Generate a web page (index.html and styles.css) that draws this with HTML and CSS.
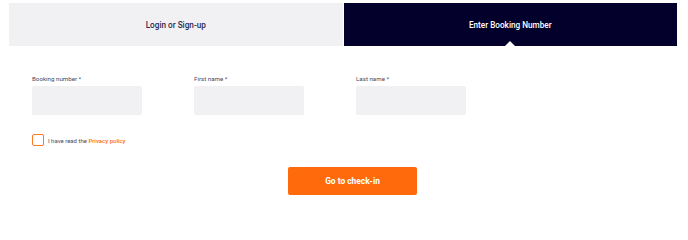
FILE: index.html
```html
<!DOCTYPE html>
<html lang="en">
<head>
<meta charset="utf-8">
<title>Check-in</title>
<link rel="stylesheet" href="styles.css">
</head>
<body>
<div class="page">
  <div class="tabs">
    <div class="tab tab-light">Login or Sign-up</div>
    <div class="tab tab-dark">Enter Booking Number</div>
  </div>
  <form class="form">
    <div class="fields">
      <label class="field">
        <span class="label">Booking number *</span>
        <span class="input"></span>
      </label>
      <label class="field">
        <span class="label">First name *</span>
        <span class="input"></span>
      </label>
      <label class="field">
        <span class="label">Last name *</span>
        <span class="input"></span>
      </label>
    </div>
    <div class="consent">
      <span class="checkbox"></span>
      <span class="consent-text">I have read the <a class="link">Privacy policy</a></span>
    </div>
    <div class="actions">
      <span class="button">Go to check-in</span>
    </div>
  </form>
</div>
</body>
</html>
```
FILE: styles.css
```css
* { box-sizing: border-box; }
html, body { margin: 0; padding: 0; background: #ffffff; }
body { font-family: "Roboto", "Lato", sans-serif; color: #2c2b4b; }

.page { padding: 3px 11px 0 9px; }

.tabs {
  display: grid;
  grid-template-columns: 1fr 1fr;
  column-gap: 1px;
}
.tab {
  height: 43px;
  display: flex;
  align-items: center;
  justify-content: center;
  font-size: 8.2px;
  font-weight: 500;
  position: relative;
}
.tab-light { background: #f1f1f3; color: #2b2a4e; }
.tab-dark { background: #03012c; color: #ffffff; }
.tab-dark::after {
  content: "";
  position: absolute;
  left: 50%;
  bottom: 0;
  margin-left: -5px;
  border-left: 5px solid transparent;
  border-right: 5px solid transparent;
  border-bottom: 5px solid #ffffff;
}

.form { padding: 29px 4px 0 23px; }

.fields { display: flex; gap: 52px; }
.field { display: flex; flex-direction: column; width: 110px; }
.label {
  font-size: 6.2px;
  line-height: 9px;
  color: #4a4963;
  margin-bottom: 2px;
}
.input {
  display: block;
  height: 29px;
  background: #f1f1f3;
  border-radius: 2px;
}

.consent {
  display: flex;
  align-items: center;
  margin-top: 19px;
}
.checkbox {
  width: 12px;
  height: 12px;
  border: 1.5px solid #ff7a22;
  border-radius: 2px;
  flex: none;
}
.consent-text {
  margin-left: 4px;
  font-size: 6px;
  color: #4a4963;
}
.link { color: #ff6a10; font-weight: 500; }

.actions {
  display: flex;
  justify-content: center;
  margin-top: 21px;
}
.button {
  width: 129px;
  height: 28px;
  background: #ff6a0c;
  border-radius: 2px;
  color: #ffffff;
  font-size: 8.4px;
  font-weight: 700;
  display: flex;
  align-items: center;
  justify-content: center;
}
```
